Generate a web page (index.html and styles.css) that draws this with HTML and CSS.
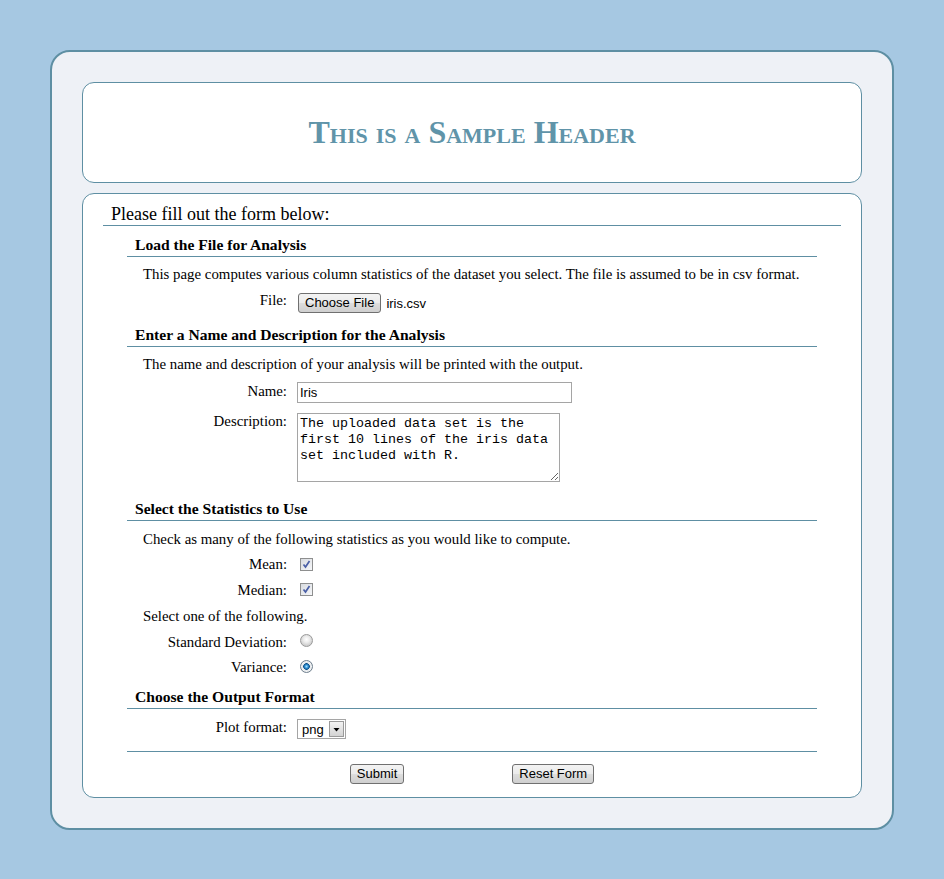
FILE: index.html
```html
<!DOCTYPE html>
<html lang="en">
<head>
<meta charset="utf-8">
<title>Sample Form</title>
<link rel="stylesheet" href="styles.css">
</head>
<body>
<div class="page">
  <header class="banner">
    <h1 class="title">This is a Sample Header</h1>
  </header>
  <main class="panel">
    <form class="form">
      <h2 class="intro">Please fill out the form below:</h2>

      <section class="sec sec-file">
        <h3 class="sec-head">Load the File for Analysis</h3>
        <p class="note">This page computes various column statistics of the dataset you select. The file is assumed to be in csv format.</p>
        <div class="row row-file">
          <label class="lbl">File:</label>
          <div class="ctl"><button type="button" class="btn btn-file">Choose File</button><span class="fname">iris.csv</span></div>
        </div>
      </section>

      <section class="sec sec-name">
        <h3 class="sec-head">Enter a Name and Description for the Analysis</h3>
        <p class="note">The name and description of your analysis will be printed with the output.</p>
        <div class="row row-name">
          <label class="lbl" for="nm">Name:</label>
          <div class="ctl"><input id="nm" class="text" type="text" value="Iris"></div>
        </div>
        <div class="row row-desc">
          <label class="lbl" for="ds">Description:</label>
          <div class="ctl"><textarea id="ds" class="area">The uploaded data set is the first 10 lines of the iris data set included with R.</textarea></div>
        </div>
      </section>

      <section class="sec sec-stats">
        <h3 class="sec-head">Select the Statistics to Use</h3>
        <p class="note note-stats">Check as many of the following statistics as you would like to compute.</p>
        <div class="row row-mean">
          <label class="lbl" for="mean">Mean:</label>
          <div class="ctl"><input id="mean" class="chk chk-mean" type="checkbox" checked></div>
        </div>
        <div class="row row-median">
          <label class="lbl" for="median">Median:</label>
          <div class="ctl"><input id="median" class="chk chk-median" type="checkbox" checked></div>
        </div>
        <p class="note note-select">Select one of the following.</p>
        <div class="row row-sd">
          <label class="lbl" for="sd">Standard Deviation:</label>
          <div class="ctl"><input id="sd" class="rad rad-sd" type="radio" name="spread"></div>
        </div>
        <div class="row row-var">
          <label class="lbl" for="var">Variance:</label>
          <div class="ctl"><input id="var" class="rad rad-var" type="radio" name="spread" checked></div>
        </div>
      </section>

      <section class="sec sec-output">
        <h3 class="sec-head">Choose the Output Format</h3>
        <div class="row row-plot">
          <label class="lbl" for="fmt">Plot format:</label>
          <div class="ctl"><select id="fmt" class="sel"><option>png</option><option>pdf</option></select></div>
        </div>
        <div class="rule"></div>
      </section>

      <div class="actions">
        <button type="submit" class="btn">Submit</button>
        <button type="reset" class="btn">Reset Form</button>
      </div>
    </form>
  </main>
</div>
</body>
</html>
```

FILE: styles.css
```css
html, body {
  background: #a6c8e2;
}

body {
  margin: 0;
  padding: 50px 50px 0;
  font-family: "Liberation Serif", "Times New Roman", serif;
  color: #000;
}

.page {
  border: 2px solid #5e8fa3;
  border-radius: 20px;
  background: #eef1f6;
  padding: 30px 30px 30px;
}

.banner {
  background: #fff;
  border: 1px solid #5e8fa3;
  border-radius: 12px;
  height: 99px;
  display: flex;
  align-items: center;
  justify-content: center;
}

.title {
  margin: 0;
  font-size: 32px;
  font-weight: bold;
  font-variant: small-caps;
  color: #6094a9;
}

.panel {
  margin-top: 10px;
  background: #fff;
  border: 1px solid #5e8fa3;
  border-radius: 12px;
  padding: 0 0 13px;
}

.form {
  margin: 0;
}

.intro {
  margin: 10px 20px 0;
  padding-left: 8px;
  font-size: 18px;
  font-weight: normal;
  line-height: 21px;
  border-bottom: 1px solid #5e8fa3;
}

.sec {
  margin: 0 44px;
}

.sec-file { margin-top: 10px; }
.sec-name { margin-top: 13px; }
.sec-stats { margin-top: 18px; }
.sec-output { margin-top: 11px; }

.sec-head {
  margin: 0;
  padding: 0 0 2px 8px;
  font-size: 15.6px;
  line-height: 18px;
  font-weight: bold;
  border-bottom: 1px solid #5e8fa3;
}

.note {
  margin: 7px 0 0;
  padding-left: 16px;
  font-size: 14.85px;
  line-height: 20px;
}

.note-stats { margin-top: 8px; }
.note-select { margin-top: 6px; }

.row {
  display: grid;
  grid-template-columns: 160px 1fr;
  column-gap: 10px;
  align-items: start;
  font-size: 14.85px;
  line-height: 20px;
  margin-top: 6px;
}

.row-name { margin-top: 7px; }
.row-desc { margin-top: 8px; }
.row-mean { margin-top: 5px; }
.row-var { margin-top: 5px; }
.row-plot { margin-top: 8px; }

.lbl {
  text-align: right;
}

.ctl {
  display: flex;
  align-items: flex-start;
  min-height: 20px;
}

.btn {
  height: 20px;
  padding: 0 6px;
  margin: 0;
  border: 1px solid #707070;
  border-radius: 3px;
  background: linear-gradient(#f3f3f3 0%, #ebebeb 48%, #dddddd 52%, #cfcfcf 100%);
  font-family: "Liberation Sans", Arial, sans-serif;
  font-size: 13px;
  line-height: 18px;
  color: #000;
}

.btn-file {
  margin: 3px 0 0 1px;
}

.fname {
  margin: 6px 0 0 5px;
  font-family: "Liberation Sans", Arial, sans-serif;
  font-size: 13px;
  line-height: 16px;
}

.text {
  box-sizing: border-box;
  width: 275px;
  height: 21px;
  margin: 1px 0 0;
  padding: 1px 2px;
  border: 1px solid #a5a5a5;
  font-family: "Liberation Sans", Arial, sans-serif;
  font-size: 13px;
  color: #000;
}

.area {
  box-sizing: border-box;
  width: 263px;
  height: 69px;
  margin: 2px 0 0;
  padding: 2px 2px;
  border: 1px solid #a5a5a5;
  font-family: "Liberation Mono", "Courier New", monospace;
  font-size: 13.33px;
  line-height: 16px;
  color: #000;
}

.chk {
  -webkit-appearance: none;
  appearance: none;
  box-sizing: border-box;
  width: 13px;
  height: 13px;
  margin: 4px 0 0 3px;
  border: 1px solid #8e8f8f;
  background: url("data:image/svg+xml,%3Csvg xmlns='http://www.w3.org/2000/svg' viewBox='0 0 11 11'%3E%3Cpath d='M2.5 5.5 L4.5 8 L8.5 2' fill='none' stroke='%234a5fa6' stroke-width='1.7'/%3E%3C/svg%3E") center / 11px 11px no-repeat,
              linear-gradient(135deg, #d8dbe0, #f6f7f9);
}

.chk-median { margin-top: 3px; }

.rad {
  -webkit-appearance: none;
  appearance: none;
  box-sizing: border-box;
  width: 13px;
  height: 13px;
  margin: 2px 0 0 3px;
  border: 1px solid #9a9a9a;
  border-radius: 50%;
  background: radial-gradient(circle at 50% 40%, #ffffff 0, #ececec 3px, #cfcfcf 6px);
}

.rad-var {
  margin-top: 3px;
  border-color: #6e7f8f;
  background: radial-gradient(circle at 50% 50%, #9fe0ff 0, #2a8bd0 1.8px, #0d4f86 3px, #dfe6ec 3.6px, #f3f3f3 5px, #cfcfcf 6px);
}

.sel {
  -webkit-appearance: none;
  appearance: none;
  box-sizing: border-box;
  width: 49px;
  height: 20px;
  margin: 2px 0 0;
  padding: 0 0 0 4px;
  border: 1px solid #a5a5a5;
  border-radius: 0;
  font-family: "Liberation Sans", Arial, sans-serif;
  font-size: 13px;
  color: #000;
  background: #fff url("data:image/svg+xml,%3Csvg xmlns='http://www.w3.org/2000/svg' width='15' height='16'%3E%3Cdefs%3E%3ClinearGradient id='g' x1='0' y1='0' x2='0' y2='1'%3E%3Cstop offset='0' stop-color='%23f4f4f4'/%3E%3Cstop offset='1' stop-color='%23d2d2d2'/%3E%3C/linearGradient%3E%3C/defs%3E%3Crect x='.5' y='.5' width='14' height='15' fill='url(%23g)' stroke='%239a9a9a'/%3E%3Cpath d='M4.5 7h6l-3 3.5z' fill='%23000'/%3E%3C/svg%3E") right 1px center / 15px 16px no-repeat;
}

.rule {
  margin-top: 12px;
  border-top: 1px solid #5e8fa3;
}

.actions {
  display: flex;
  justify-content: center;
  gap: 108px;
  margin-top: 12px;
}
```
